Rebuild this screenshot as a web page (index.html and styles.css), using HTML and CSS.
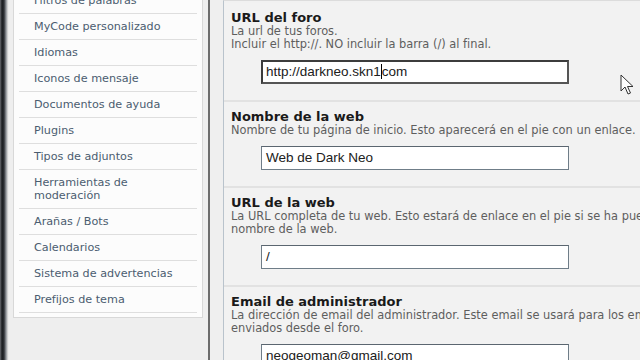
FILE: index.html
```html
<!DOCTYPE html>
<html lang="es">
<head>
<meta charset="utf-8">
<link rel="stylesheet" href="styles.css">
</head>
<body>
<div class="frame">
  <div class="edge"></div>
  <aside class="side">
    <ul class="menu">
      <li>Filtros de palabras</li>
      <li>MyCode personalizado</li>
      <li>Idiomas</li>
      <li>Iconos de mensaje</li>
      <li>Documentos de ayuda</li>
      <li>Plugins</li>
      <li>Tipos de adjuntos</li>
      <li>Herramientas de<br>moderación</li>
      <li>Arañas / Bots</li>
      <li>Calendarios</li>
      <li>Sistema de advertencias</li>
      <li>Prefijos de tema</li>
    </ul>
  </aside>
  <div class="divider"></div>
  <div class="gutter"></div>
  <main class="panel">
    <section class="row">
      <h3 class="title">URL del foro</h3>
      <p class="desc">La url de tus foros.<br>Incluir el http://. NO incluir la barra (/) al final.</p>
      <div class="field focus">http://darkneo.skn1<span class="caret"></span>com</div>
    </section>
    <section class="row">
      <h3 class="title">Nombre de la web</h3>
      <p class="desc">Nombre de tu página de inicio. Esto aparecerá en el pie con un enlace.</p>
      <div class="field">Web de Dark Neo</div>
    </section>
    <section class="row">
      <h3 class="title">URL de la web</h3>
      <p class="desc">La URL completa de tu web. Esto estará de enlace en el pie si se ha puesto un<br>nombre de la web.</p>
      <div class="field">/</div>
    </section>
    <section class="row">
      <h3 class="title">Email de administrador</h3>
      <p class="desc">La dirección de email del administrador. Este email se usará para los emails<br>enviados desde el foro.</p>
      <div class="field">neogeoman@gmail.com</div>
    </section>
    <svg class="pointer" width="14" height="22" viewBox="0 0 14 22">
      <path d="M1 1 L1 17 L5 13 L8 20 L10.5 19 L7.5 12.5 L13 12.5 Z" fill="#fdfdfd" stroke="#333" stroke-width="1" stroke-linejoin="round"/>
    </svg>
  </main>
</div>
</body>
</html>
```
FILE: styles.css
```css
html, body {
  margin: 0;
  padding: 0;
  background: #efefef;
}
.frame {
  display: flex;
  width: 640px;
  height: 360px;
  overflow: hidden;
}
.edge {
  flex: 0 0 9px;
  background: linear-gradient(to right, #6a6d72 0, #1a1c20 2px, #2c2f34 4px, #8c9096 6px, #e4e4e4 8px, #efefef 9px);
}
.side {
  flex: 0 0 199px;
  box-sizing: border-box;
  padding: 0 5px 0 4px;
  background: #eeeeee;
}
.menu {
  list-style: none;
  margin: -15px 0 0 0;
  padding: 3px 5px 4px 5px;
  background: #fcfcfc;
  border: 1px solid #d8d8d8;
  border-top: none;
  font-family: "DejaVu Sans", Verdana, sans-serif;
  font-size: 11.2px;
  line-height: 13px;
  color: #4b5d70;
}
.menu li {
  padding: 6px 0 6px 15px;
  border-bottom: 1px solid #dedede;
}
.divider {
  flex: 0 0 2px;
  background: #6c6c6c;
}
.gutter {
  flex: 0 0 13px;
  background: #efefef;
}
.panel {
  position: relative;
  flex: 0 0 520px;
  border-left: 1px solid #b9c3cc;
  background: #f1f1f1;
  padding-top: 2px;
  border-top: 1px solid #dcdcdc;
}
.row {
  padding: 8px 0 16px 7px;
  border-bottom: 2px solid #e2e2e2;
  background: #f2f2f2;
}
.title {
  margin: 0;
  font-family: "DejaVu Sans", Verdana, sans-serif;
  font-size: 13px;
  line-height: 14px;
  font-weight: bold;
  color: #1a1a1a;
}
.desc {
  margin: 0;
  font-family: "DejaVu Sans", Verdana, sans-serif;
  font-size: 11.4px;
  line-height: 13px;
  color: #5e5e5e;
  white-space: nowrap;
}
.field {
  margin: 9px 0 0 30px;
  width: 308px;
  height: 24px;
  box-sizing: border-box;
  border: 1px solid #6f7d88;
  border-top-color: #5b6670;
  background: #ffffff;
  padding: 0 4px;
  font-family: "Liberation Sans", Arial, sans-serif;
  font-size: 13.5px;
  line-height: 22px;
  color: #202020;
}
.field.focus {
  border: 2px solid #3c3c3c;
  border-right-color: #555;
  border-bottom-color: #555;
  line-height: 20px;
  padding-left: 3px;
}
.caret {
  display: inline-block;
  width: 1px;
  height: 15px;
  background: #000;
  vertical-align: -3px;
}
.pointer {
  position: absolute;
  left: 396px;
  top: 73px;
}
```
